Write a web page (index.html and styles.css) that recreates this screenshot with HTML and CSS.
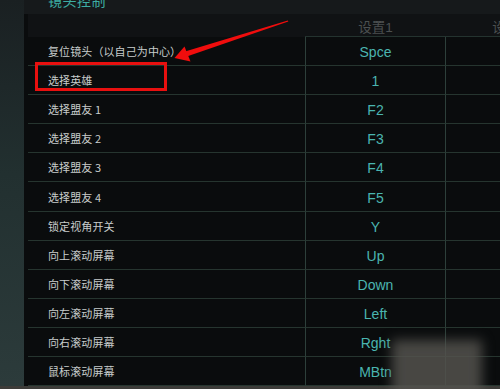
FILE: index.html
```html
<!DOCTYPE html>
<html lang="zh-CN">
<head>
<meta charset="utf-8">
<title>镜头控制</title>
<link rel="stylesheet" href="styles.css">
</head>
<body>
<div class="app">
  <div class="upper">
    <div class="side"></div>
    <div class="main">
      <div class="topbar"><span class="title">镜头控制</span></div>
      <div class="panel">
        <div class="grid">
          <div class="hcell hname"></div>
          <div class="hcell">设置1</div>
          <div class="hcell hlast">设置2</div>

          <div class="cell name"><span class="label">复位镜头（以自己为中心）</span></div><div class="cell key">Spce</div><div class="cell alt"></div>
          <div class="cell name"><span class="label">选择英雄</span></div><div class="cell key">1</div><div class="cell alt"></div>
          <div class="cell name"><span class="label">选择盟友 1</span></div><div class="cell key">F2</div><div class="cell alt"></div>
          <div class="cell name"><span class="label">选择盟友 2</span></div><div class="cell key">F3</div><div class="cell alt"></div>
          <div class="cell name"><span class="label">选择盟友 3</span></div><div class="cell key">F4</div><div class="cell alt"></div>
          <div class="cell name"><span class="label">选择盟友 4</span></div><div class="cell key">F5</div><div class="cell alt"></div>
          <div class="cell name"><span class="label">锁定视角开关</span></div><div class="cell key">Y</div><div class="cell alt"></div>
          <div class="cell name"><span class="label">向上滚动屏幕</span></div><div class="cell key">Up</div><div class="cell alt"></div>
          <div class="cell name"><span class="label">向下滚动屏幕</span></div><div class="cell key">Down</div><div class="cell alt"></div>
          <div class="cell name"><span class="label">向左滚动屏幕</span></div><div class="cell key">Left</div><div class="cell alt"></div>
          <div class="cell name"><span class="label">向右滚动屏幕</span></div><div class="cell key">Rght</div><div class="cell alt"></div>
          <div class="cell name"><span class="label">鼠标滚动屏幕</span></div><div class="cell key">MBtn</div><div class="cell alt"></div>
        </div>
      </div>
    </div>
  </div>
  <div class="bottom"></div>

  <div class="highlight"></div>
  <svg class="arrow" width="500" height="389" viewBox="0 0 500 389">
    <polygon points="186.8,56.6 185.0,51.4 287.8,20.4 288.3,21.6" fill="#f00d0d"/>
    <polygon points="174.5,58 184.5,46.5 190.5,61.5" fill="#f00d0d"/>
  </svg>
  <div class="smudge"></div>
</div>
</body>
</html>
```
FILE: styles.css
```css
html, body {
  margin: 0;
  padding: 0;
}
body {
  width: 500px;
  height: 389px;
  overflow: hidden;
  background: #0a0c0d;
  font-family: "Liberation Sans", "Noto Sans CJK SC", sans-serif;
}
.app {
  position: relative;
  width: 500px;
  height: 389px;
  display: flex;
  flex-direction: column;
  overflow: hidden;
}
.upper {
  display: flex;
  flex: 1;
  min-height: 0;
}
.side {
  width: 24px;
  flex: none;
  background: linear-gradient(180deg, #1a2022 0%, #223030 45%, #2c3b3b 100%);
}
.main {
  flex: 1;
  display: flex;
  flex-direction: column;
  min-width: 0;
}
.topbar {
  height: 14px;
  flex: none;
  overflow: hidden;
  background: #16191b;
  padding-left: 24px;
}
.title {
  display: block;
  margin-top: -10px;
  font-family: "Noto Sans CJK SC", sans-serif;
  font-size: 14px;
  line-height: 20px;
  letter-spacing: 0.5px;
  color: #3dada3;
}
.panel {
  flex: 1;
  padding-left: 4px;
  background: #0a0c0d;
  overflow: hidden;
}
.grid {
  display: grid;
  grid-template-columns: 277px 141px 141px;
  grid-template-rows: 23px;
  grid-auto-rows: 29.1px;
}
.hcell {
  box-sizing: border-box;
  height: 23px;
  border-bottom: 1px solid #24332f;
  background: #101214;
  color: #4c5051;
  font-size: 13.5px;
  display: flex;
  align-items: center;
  justify-content: center;
  padding-top: 1px;
}
.hname {
  border-bottom-color: #101214;
}
.hlast {
  padding-right: 14px;
}
.cell {
  box-sizing: border-box;
  border-bottom: 1px solid #26352f;
  display: flex;
  align-items: center;
}
.name {
  justify-content: flex-start;
  color: #c8cdcc;
  font-family: "Noto Sans CJK SC", sans-serif;
  font-size: 11px;
}
.label {
  margin-left: 20px;
  letter-spacing: 0.1px;
}
.key {
  justify-content: center;
  border-left: 1px solid #2d3f3a;
  border-right: 1px solid #2d3f3a;
  color: #4ab5b0;
  font-size: 14px;
  padding-top: 2px;
}
.bottom {
  height: 3px;
  flex: none;
  background: #3d3c39;
}
.highlight {
  position: absolute;
  left: 35px;
  top: 62px;
  width: 132px;
  height: 29px;
  box-sizing: border-box;
  border: 3px solid #e8100f;
}
.arrow {
  position: absolute;
  left: 0;
  top: 0;
  pointer-events: none;
}
.smudge {
  position: absolute;
  left: 392px;
  top: 340px;
  width: 90px;
  height: 60px;
  background: rgba(84, 82, 78, 0.85);
  filter: blur(6px);
  pointer-events: none;
}
```
